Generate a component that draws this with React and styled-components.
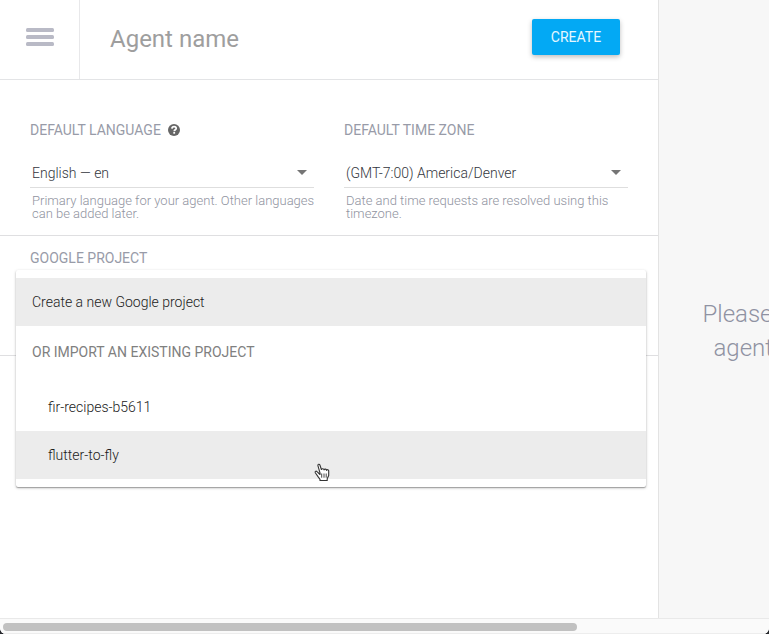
import React from "react";
import styled, { createGlobalStyle } from "styled-components";

const GlobalStyle = createGlobalStyle`
  * { box-sizing: border-box; }
  body {
    margin: 0;
    background: #26282d;
    font-family: Roboto, "Liberation Sans", sans-serif;
    font-size: 14px;
    font-weight: 400;
    overflow: hidden;
  }
`;

const Window = styled.div`
  width: 769px;
  height: 634px;
  display: flex;
  flex-direction: column;
  overflow: hidden;
  background: #fff;
  border-radius: 0 0 6px 6px;
`;

const Content = styled.div`
  flex: 1;
  min-height: 0;
  display: flex;
`;

const Main = styled.main`
  flex: 0 0 659px;
  border-right: 1px solid #e3e3e3;
`;

const Header = styled.header`
  height: 80px;
  display: flex;
  border-bottom: 1px solid #e3e4e6;
`;

const MenuButton = styled.div`
  width: 80px;
  padding: 28px 0 0 26px;
  display: flex;
  flex-direction: column;
  gap: 3px;
  border-right: 1px solid #e8e8ea;
`;

const Bar = styled.span`
  width: 28px;
  height: 4px;
  border-radius: 1.5px;
  background: #b9bac6;
`;

const AgentName = styled.div`
  flex: 1;
  padding: 24px 0 0 30px;
  font-size: 24px;
  line-height: 30px;
  color: #9e9e9e;
`;

const CreateButton = styled.button`
  width: 88px;
  height: 36px;
  margin: 19px 38px 0 0;
  padding: 0;
  border: 0;
  border-radius: 2px;
  background: #03a9f4;
  color: #e6f7ff;
  font: 400 14px/37px Roboto, sans-serif;
  box-shadow: 0 2px 5px rgba(0, 0, 0, 0.26);
`;

const Section = styled.section`
  position: relative;
  height: ${(p) => p.$height}px;
  padding: ${(p) => p.$top}px 30px 0;
  display: flex;
  gap: 30px;
  border-bottom: 1px solid #dfdfe1;
`;

const Field = styled.div`
  width: 284px;
`;

const FieldLabel = styled.div`
  height: 20px;
  display: flex;
  align-items: center;
  gap: 7px;
  line-height: 20px;
  color: #989ba8;
`;

const Select = styled.div`
  height: 32px;
  margin-top: 16px;
  padding: 1px 7px 0 2px;
  display: flex;
  justify-content: space-between;
  border-bottom: 1px solid #dedede;
  line-height: 32px;
  font-weight: 300;
  color: #33363d;
`;

const Caret = styled.span`
  margin-top: 13px;
  width: 0;
  height: 0;
  border: 5px solid transparent;
  border-top-color: #757575;
  border-bottom: 0;
`;

const Hint = styled.div`
  padding: 6px 0 0 2px;
  font-size: 13px;
  font-weight: 300;
  line-height: 13px;
  white-space: pre;
  color: #9093a0;
`;

const Dropdown = styled.div`
  position: absolute;
  top: 34px;
  left: 16px;
  width: 630px;
  padding: 8px 0;
  background: #fff;
  border-radius: 2px;
  box-shadow: 0 1px 3px rgba(0, 0, 0, 0.25), 0 1px 1px rgba(0, 0, 0, 0.25);
`;

const Option = styled.div`
  height: 48px;
  padding-left: ${(p) => (p.$nested ? 32 : 16)}px;
  line-height: 48px;
  font-weight: 300;
  color: #212121;
  background: ${(p) => (p.$active ? "#ececec" : "#fff")};
`;

const GroupLabel = styled.div`
  height: 57px;
  padding-left: 16px;
  line-height: 52px;
  color: #808080;
`;

const Cursor = styled.svg`
  position: absolute;
  left: 298px;
  top: 193px;
`;

const Side = styled.aside`
  flex: 1;
  padding: 297px 0 0 43.5px;
  overflow: hidden;
  background: #f7f7f7;
  font-size: 24px;
  font-weight: 300;
  line-height: 34px;
  white-space: nowrap;
  color: #8f92a2;
`;

const SideLine = styled.div`
  padding-left: ${(p) => p.$indent || 0}px;
`;

const ScrollTrack = styled.div`
  height: 16px;
  padding: 4px 3px;
  background: #fafafa;
  border-top: 1px solid #e9e9e9;
  border-bottom: 1px solid #ededed;
`;

const ScrollThumb = styled.div`
  width: 574px;
  height: 8px;
  border-radius: 4px;
  background: #c1c1c1;
`;

function HelpIcon() {
  return (
    <svg width="12" height="12" viewBox="0 0 12 12">
      <circle cx="6" cy="6" r="6" fill="#666" />
      <path
        d="M3.900 4.600C4 3.300 4.900 2.700 6.100 2.700c1.200 0 2.100.7 2.100 1.700C8.200 5.700 6.300 5.700 6.200 7.200"
        fill="none"
        stroke="#fff"
        strokeWidth="1.700"
      />
      <rect x="5.300" y="8" width="1.800" height="1.700" fill="#fff" />
    </svg>
  );
}

function HandCursor() {
  return (
    <Cursor width="17" height="19" viewBox="0 0 17 19">
      <path
        d="M6 11.500 L3 8.700C1.900 7.600.7 8.500 1.300 9.700L4.200 13.900 6 16.300V17.500H13.200V15.800L14.700 12.500V7.700C14.700 6.500 13 6.300 12.600 7.400 12.400 5.800 10.500 5.700 10.100 6.900 9.800 5.500 7.800 5.500 7.400 6.500L5.900 2C5.400.7 3.600 1.100 3.900 2.600L6 9.800Z"
        fill="#fff"
        stroke="#333"
        strokeWidth="1.100"
        strokeLinejoin="round"
      />
      <path d="M7.700 10.500V14.700M10 10.500V14.700M12.200 10.500V14.700" stroke="#333" strokeWidth="0.900" />
    </Cursor>
  );
}

export default function App() {
  return (
    <>
      <GlobalStyle />
      <Window>
        <Content>
          <Main>
            <Header>
              <MenuButton>
                <Bar />
                <Bar />
                <Bar />
              </MenuButton>
              <AgentName>Agent name</AgentName>
              <CreateButton>CREATE</CreateButton>
            </Header>
            <Section $height={156} $top={40}>
              <Field>
                <FieldLabel>
                  DEFAULT LANGUAGE <HelpIcon />
                </FieldLabel>
                <Select>
                  English — en <Caret />
                </Select>
                <Hint>{"Primary language for your agent. Other languages\ncan be added later."}</Hint>
              </Field>
              <Field>
                <FieldLabel>DEFAULT TIME ZONE</FieldLabel>
                <Select>
                  (GMT-7:00) America/Denver <Caret />
                </Select>
                <Hint>{"Date and time requests are resolved using this\ntimezone."}</Hint>
              </Field>
            </Section>
            <Section $height={120} $top={12}>
              <FieldLabel>GOOGLE PROJECT</FieldLabel>
              <Dropdown>
                <Option $active>Create a new Google project</Option>
                <GroupLabel>OR IMPORT AN EXISTING PROJECT</GroupLabel>
                <Option $nested>fir-recipes-b5611</Option>
                <Option $nested $active>
                  flutter-to-fly
                </Option>
                <HandCursor />
              </Dropdown>
            </Section>
          </Main>
          <Side>
            <SideLine>Please</SideLine>
            <SideLine $indent={11}>agent</SideLine>
          </Side>
        </Content>
        <ScrollTrack>
          <ScrollThumb />
        </ScrollTrack>
      </Window>
    </>
  );
}
